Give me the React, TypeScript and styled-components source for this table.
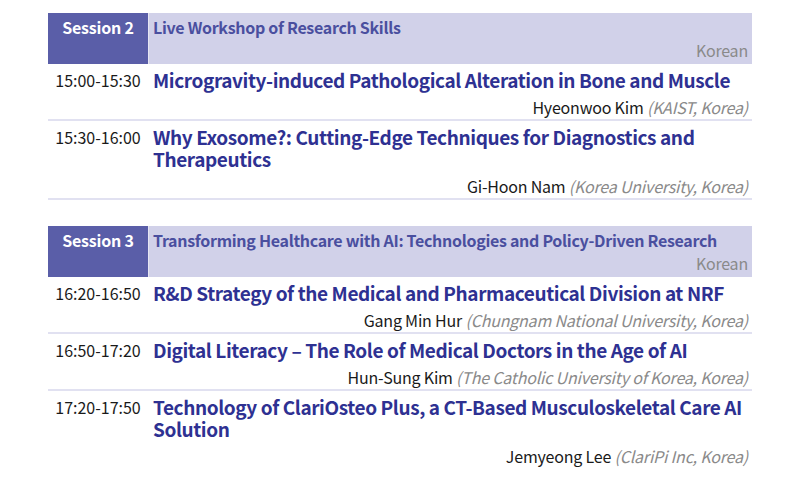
import styled, { createGlobalStyle } from 'styled-components';

const GlobalStyle = createGlobalStyle`
  html, body {
    margin: 0;
    padding: 0;
    background: #ffffff;
  }
  body {
    font-family: 'Noto Sans CJK KR', 'Noto Sans', sans-serif;
  }
`;

const Page = styled.div`
  width: 704px;
  padding: 13px 48px 0;
`;

const Session = styled.section`
  margin-bottom: 26px;
`;

const Header = styled.div`
  display: grid;
  grid-template-columns: 100px 1fr;
  column-gap: 1px;
  height: 51px;
  background: #e6e6f3;
`;

const SessionLabel = styled.div`
  background: #5a5ea8;
  color: #ffffff;
  font-weight: 700;
  font-size: 16px;
  letter-spacing: -0.2px;
  line-height: 22px;
  text-align: center;
  padding-top: 3px;
`;

const SessionInfo = styled.div`
  background: #d1d1e9;
  padding: 3px 4px 0 4px;
  display: flex;
  flex-direction: column;
`;

const SessionTitle = styled.div`
  color: #4a4f9f;
  font-weight: 700;
  font-size: 16px;
  letter-spacing: -0.3px;
  line-height: 22px;
  white-space: nowrap;
`;

const Language = styled.div`
  color: #8a8a8a;
  font-size: 16px;
  letter-spacing: -0.2px;
  line-height: 22px;
  text-align: right;
  margin-top: 1px;
`;

const Row = styled.div<{ $last?: boolean }>`
  display: grid;
  grid-template-columns: 100px 1fr;
  column-gap: 1px;
  padding: 5px 0 0;
  border-bottom: 2px solid ${(p) => (p.$last ? 'transparent' : '#e1e1f1')};
`;

const Time = styled.div`
  color: #1a1a1a;
  font-size: 16px;
  line-height: 22px;
  text-align: center;
`;

const Talk = styled.div`
  padding: 0 4px;
`;

const TalkTitle = styled.div`
  color: #2e3192;
  font-weight: 700;
  font-size: 19px;
  letter-spacing: -0.4px;
  line-height: 22px;
`;

const Speaker = styled.div`
  margin-top: 4px;
  color: #1a1a1a;
  font-size: 16px;
  letter-spacing: -0.2px;
  line-height: 24px;
  text-align: right;
`;

const Affiliation = styled.span`
  color: #8a8a8a;
  font-style: italic;
`;

type Talk = { time: string; title: string; name: string; org: string };

const sessions: { label: string; title: string; talks: Talk[] }[] = [
  {
    label: 'Session 2',
    title: 'Live Workshop of Research Skills',
    talks: [
      {
        time: '15:00-15:30',
        title: 'Microgravity-induced Pathological Alteration in Bone and Muscle',
        name: 'Hyeonwoo Kim',
        org: '(KAIST, Korea)',
      },
      {
        time: '15:30-16:00',
        title: 'Why Exosome?: Cutting-Edge Techniques for Diagnostics and Therapeutics',
        name: 'Gi-Hoon Nam',
        org: '(Korea University, Korea)',
      },
    ],
  },
  {
    label: 'Session 3',
    title: 'Transforming Healthcare with AI: Technologies and Policy-Driven Research',
    talks: [
      {
        time: '16:20-16:50',
        title: 'R&D Strategy of the Medical and Pharmaceutical Division at NRF',
        name: 'Gang Min Hur',
        org: '(Chungnam National University, Korea)',
      },
      {
        time: '16:50-17:20',
        title: 'Digital Literacy – The Role of Medical Doctors in the Age of AI',
        name: 'Hun-Sung Kim',
        org: '(The Catholic University of Korea, Korea)',
      },
      {
        time: '17:20-17:50',
        title: 'Technology of ClariOsteo Plus, a CT-Based Musculoskeletal Care AI Solution',
        name: 'Jemyeong Lee',
        org: '(ClariPi Inc, Korea)',
      },
    ],
  },
];

export default function App() {
  return (
    <>
      <GlobalStyle />
      <Page>
        {sessions.map((s, si) => (
          <Session key={s.label}>
            <Header>
              <SessionLabel>{s.label}</SessionLabel>
              <SessionInfo>
                <SessionTitle>{s.title}</SessionTitle>
                <Language>Korean</Language>
              </SessionInfo>
            </Header>
            {s.talks.map((t, ti) => (
              <Row key={t.time} $last={si === sessions.length - 1 && ti === s.talks.length - 1}>
                <Time>{t.time}</Time>
                <Talk>
                  <TalkTitle>{t.title}</TalkTitle>
                  <Speaker>
                    {t.name} <Affiliation>{t.org}</Affiliation>
                  </Speaker>
                </Talk>
              </Row>
            ))}
          </Session>
        ))}
      </Page>
    </>
  );
}
